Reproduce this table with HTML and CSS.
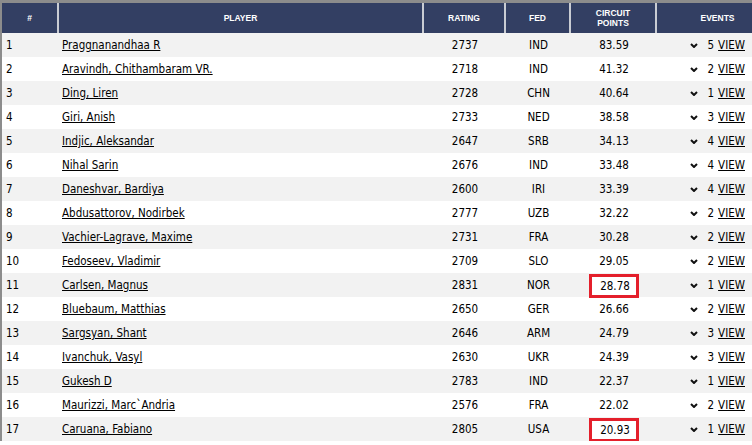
FILE: index.html
```html
<!DOCTYPE html>
<html>
<head>
<meta charset="utf-8">
<link rel="stylesheet" href="styles.css">
</head>
<body>
<div class="board">
  <div class="row head">
    <div class="c">#</div>
    <div class="c">PLAYER</div>
    <div class="c">RATING</div>
    <div class="c">FED</div>
    <div class="c">CIRCUIT<br>POINTS</div>
    <div class="c events">EVENTS</div>
  </div>
  <div class="row"><div class="rank">1</div><div class="name"><a href="#">Praggnanandhaa R</a></div><div class="num">2737</div><div class="num">IND</div><div class="num">83.59</div><div class="ev"><svg class="chev" viewBox="0 0 8 5"><polyline points="1,1 4,4 7,1"/></svg><span class="cnt">5</span><a href="#">VIEW</a></div></div>
  <div class="row"><div class="rank">2</div><div class="name"><a href="#">Aravindh, Chithambaram VR.</a></div><div class="num">2718</div><div class="num">IND</div><div class="num">41.32</div><div class="ev"><svg class="chev" viewBox="0 0 8 5"><polyline points="1,1 4,4 7,1"/></svg><span class="cnt">2</span><a href="#">VIEW</a></div></div>
  <div class="row"><div class="rank">3</div><div class="name"><a href="#">Ding, Liren</a></div><div class="num">2728</div><div class="num">CHN</div><div class="num">40.64</div><div class="ev"><svg class="chev" viewBox="0 0 8 5"><polyline points="1,1 4,4 7,1"/></svg><span class="cnt">1</span><a href="#">VIEW</a></div></div>
  <div class="row"><div class="rank">4</div><div class="name"><a href="#">Giri, Anish</a></div><div class="num">2733</div><div class="num">NED</div><div class="num">38.58</div><div class="ev"><svg class="chev" viewBox="0 0 8 5"><polyline points="1,1 4,4 7,1"/></svg><span class="cnt">3</span><a href="#">VIEW</a></div></div>
  <div class="row"><div class="rank">5</div><div class="name"><a href="#">Indjic, Aleksandar</a></div><div class="num">2647</div><div class="num">SRB</div><div class="num">34.13</div><div class="ev"><svg class="chev" viewBox="0 0 8 5"><polyline points="1,1 4,4 7,1"/></svg><span class="cnt">4</span><a href="#">VIEW</a></div></div>
  <div class="row"><div class="rank">6</div><div class="name"><a href="#">Nihal Sarin</a></div><div class="num">2676</div><div class="num">IND</div><div class="num">33.48</div><div class="ev"><svg class="chev" viewBox="0 0 8 5"><polyline points="1,1 4,4 7,1"/></svg><span class="cnt">4</span><a href="#">VIEW</a></div></div>
  <div class="row"><div class="rank">7</div><div class="name"><a href="#">Daneshvar, Bardiya</a></div><div class="num">2600</div><div class="num">IRI</div><div class="num">33.39</div><div class="ev"><svg class="chev" viewBox="0 0 8 5"><polyline points="1,1 4,4 7,1"/></svg><span class="cnt">4</span><a href="#">VIEW</a></div></div>
  <div class="row"><div class="rank">8</div><div class="name"><a href="#">Abdusattorov, Nodirbek</a></div><div class="num">2777</div><div class="num">UZB</div><div class="num">32.22</div><div class="ev"><svg class="chev" viewBox="0 0 8 5"><polyline points="1,1 4,4 7,1"/></svg><span class="cnt">2</span><a href="#">VIEW</a></div></div>
  <div class="row"><div class="rank">9</div><div class="name"><a href="#">Vachier-Lagrave, Maxime</a></div><div class="num">2731</div><div class="num">FRA</div><div class="num">30.28</div><div class="ev"><svg class="chev" viewBox="0 0 8 5"><polyline points="1,1 4,4 7,1"/></svg><span class="cnt">2</span><a href="#">VIEW</a></div></div>
  <div class="row"><div class="rank">10</div><div class="name"><a href="#">Fedoseev, Vladimir</a></div><div class="num">2709</div><div class="num">SLO</div><div class="num">29.05</div><div class="ev"><svg class="chev" viewBox="0 0 8 5"><polyline points="1,1 4,4 7,1"/></svg><span class="cnt">2</span><a href="#">VIEW</a></div></div>
  <div class="row"><div class="rank">11</div><div class="name"><a href="#">Carlsen, Magnus</a></div><div class="num">2831</div><div class="num">NOR</div><div class="num"><span class="mark">28.78</span></div><div class="ev"><svg class="chev" viewBox="0 0 8 5"><polyline points="1,1 4,4 7,1"/></svg><span class="cnt">1</span><a href="#">VIEW</a></div></div>
  <div class="row"><div class="rank">12</div><div class="name"><a href="#">Bluebaum, Matthias</a></div><div class="num">2650</div><div class="num">GER</div><div class="num">26.66</div><div class="ev"><svg class="chev" viewBox="0 0 8 5"><polyline points="1,1 4,4 7,1"/></svg><span class="cnt">2</span><a href="#">VIEW</a></div></div>
  <div class="row"><div class="rank">13</div><div class="name"><a href="#">Sargsyan, Shant</a></div><div class="num">2646</div><div class="num">ARM</div><div class="num">24.79</div><div class="ev"><svg class="chev" viewBox="0 0 8 5"><polyline points="1,1 4,4 7,1"/></svg><span class="cnt">3</span><a href="#">VIEW</a></div></div>
  <div class="row"><div class="rank">14</div><div class="name"><a href="#">Ivanchuk, Vasyl</a></div><div class="num">2630</div><div class="num">UKR</div><div class="num">24.39</div><div class="ev"><svg class="chev" viewBox="0 0 8 5"><polyline points="1,1 4,4 7,1"/></svg><span class="cnt">3</span><a href="#">VIEW</a></div></div>
  <div class="row"><div class="rank">15</div><div class="name"><a href="#">Gukesh D</a></div><div class="num">2783</div><div class="num">IND</div><div class="num">22.37</div><div class="ev"><svg class="chev" viewBox="0 0 8 5"><polyline points="1,1 4,4 7,1"/></svg><span class="cnt">1</span><a href="#">VIEW</a></div></div>
  <div class="row"><div class="rank">16</div><div class="name"><a href="#">Maurizzi, Marc`Andria</a></div><div class="num">2576</div><div class="num">FRA</div><div class="num">22.02</div><div class="ev"><svg class="chev" viewBox="0 0 8 5"><polyline points="1,1 4,4 7,1"/></svg><span class="cnt">2</span><a href="#">VIEW</a></div></div>
  <div class="row"><div class="rank">17</div><div class="name"><a href="#">Caruana, Fabiano</a></div><div class="num">2805</div><div class="num">USA</div><div class="num"><span class="mark">20.93</span></div><div class="ev"><svg class="chev" viewBox="0 0 8 5"><polyline points="1,1 4,4 7,1"/></svg><span class="cnt">1</span><a href="#">VIEW</a></div></div>
</div>
</body>
</html>
```

FILE: styles.css
```css
* { box-sizing: border-box; }
html, body { margin: 0; padding: 0; background: #fff; }
body {
  font-family: "DejaVu Sans Condensed", "Liberation Sans", sans-serif;
  font-size: 11.5px;
  color: #000;
  overflow: hidden;
}
.board {
  border-top: 3px solid #8c8c8c;
  border-left: 2px solid #8c8c8c;
  width: 752px;
}
.row {
  display: grid;
  grid-template-columns: 57px 365px 82px 65px 86px 1fr;
  height: 24px;
  align-items: center;
}
.row:nth-child(even) { background: #f2f2f2; }
.row:nth-child(odd) { background: #fff; }
.row.head {
  height: 30px;
  background: #333f63;
  align-items: stretch;
}
.head .c {
  display: flex;
  align-items: center;
  justify-content: center;
  text-align: center;
  color: #fff;
  font-family: "Liberation Sans", Arial, sans-serif;
  font-weight: bold;
  font-size: 8.5px;
  line-height: 10px;
  border-right: 2px solid #c9ccd3;
}
.head .c.events { border-right: none; padding-left: 26px; }
.rank { padding-left: 4px; }
.name { padding-left: 3px; }
a { color: #000; text-decoration: underline; }
.num { text-align: center; }
.ev {
  display: flex;
  justify-content: flex-end;
  align-items: center;
  padding-right: 7px;
}
.cnt { margin-right: 4px; }
.chev {
  width: 8px;
  height: 5px;
  margin-right: 10px;
  margin-top: 1px;
}
.chev polyline {
  fill: none;
  stroke: #111;
  stroke-width: 2;
}
.mark {
  display: inline-block;
  background: #fff;
  border: 3px solid #e41f2b;
  height: 24px;
  line-height: 18px;
  padding: 0 6px 0 8px;
  position: relative;
  top: 1px;
}
```
